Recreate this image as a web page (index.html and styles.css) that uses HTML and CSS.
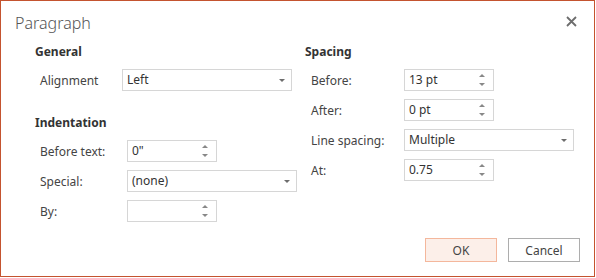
FILE: index.html
```html
<!DOCTYPE html>
<html lang="en">
<head>
    <meta charset="UTF-8">
    <title>Paragraph</title>
    <link rel="stylesheet" href="styles.css">
</head>
<body>
    <div class="dialog">
        <div class="dialog-header">
            <h1>Paragraph</h1>
            <span class="close">
                <svg width="11" height="11" viewBox="0 0 11 11"><path d="M1 1 L10 10 M10 1 L1 10" stroke="#6d6d6d" stroke-width="1.8"/></svg>
            </span>
        </div>

        <div class="dialog-body">
            <div class="column left">
                <h2>General</h2>
                <div class="row">
                    <label class="narrow">Alignment</label>
                    <div class="select">Left</div>
                </div>

                <h2 class="spaced">Indentation</h2>
                <div class="row">
                    <label>Before text:</label>
                    <div class="spinner">0"</div>
                </div>
                <div class="row">
                    <label>Special:</label>
                    <div class="select">(none)</div>
                </div>
                <div class="row">
                    <label>By:</label>
                    <div class="spinner"></div>
                </div>
            </div>

            <div class="column right">
                <h2>Spacing</h2>
                <div class="row">
                    <label>Before:</label>
                    <div class="spinner">13 pt</div>
                </div>
                <div class="row">
                    <label>After:</label>
                    <div class="spinner">0 pt</div>
                </div>
                <div class="row">
                    <label>Line spacing:</label>
                    <div class="select">Multiple</div>
                </div>
                <div class="row">
                    <label>At:</label>
                    <div class="spinner">0.75</div>
                </div>
            </div>
        </div>

        <div class="dialog-footer">
            <button class="primary">OK</button>
            <button>Cancel</button>
        </div>
    </div>
</body>
</html>
```

FILE: styles.css
```css
* {
    box-sizing: border-box;
}

body {
    margin: 0;
    font-family: 'Noto Sans', 'Open Sans', sans-serif;
    font-size: 12px;
    color: #444;
    background: white;
}

.dialog {
    width: 595px;
    height: 277px;
    border: 1px solid #c4532f;
    display: flex;
    flex-direction: column;
}

.dialog-header {
    display: flex;
    justify-content: space-between;
    align-items: center;
    height: 43px;
    padding: 0 17px 0 14px;
}

h1 {
    margin: 0;
    font-size: 16px;
    font-weight: 300;
    color: #555;
}

.close {
    display: flex;
    margin-top: -3px;
}

.dialog-body {
    display: flex;
    padding-left: 34px;
}

.column.left {
    width: 270px;
}

h2 {
    margin: 0 0 9px;
    height: 16px;
    line-height: 16px;
    font-size: 12px;
    font-weight: bold;
    color: #333;
}

h2.spaced {
    margin-top: 24px;
}

.row {
    display: flex;
    align-items: center;
    height: 22px;
    margin-bottom: 8px;
    padding-left: 5px;
}

.left label {
    width: 87px;
}

.left label.narrow {
    width: 82px;
}

.right label {
    width: 94px;
    padding-left: 1px;
}

.select,
.spinner {
    position: relative;
    height: 22px;
    line-height: 20px;
    padding-left: 4px;
    border: 1px solid #d6d6d6;
    color: #333;
}

.select {
    width: 170px;
}

.spinner {
    width: 90px;
}

.select::after {
    content: "";
    position: absolute;
    right: 6px;
    top: 9px;
    border-left: 3px solid transparent;
    border-right: 3px solid transparent;
    border-top: 3px solid #6d6d6d;
}

.spinner::before,
.spinner::after {
    content: "";
    position: absolute;
    right: 8px;
    border-left: 3px solid transparent;
    border-right: 3px solid transparent;
}

.spinner::before {
    top: 4px;
    border-bottom: 3px solid #888;
}

.spinner::after {
    bottom: 4px;
    border-top: 3px solid #888;
}

.dialog-footer {
    margin-top: auto;
    display: flex;
    justify-content: flex-end;
    gap: 11px;
    padding: 0 14px 14px 0;
}

button {
    width: 72px;
    height: 24px;
    font-family: inherit;
    font-size: 12px;
    color: #444;
    background: white;
    border: 1px solid #adadad;
}

button.primary {
    background: #fcefe9;
    border-color: #f4b79c;
}
```
